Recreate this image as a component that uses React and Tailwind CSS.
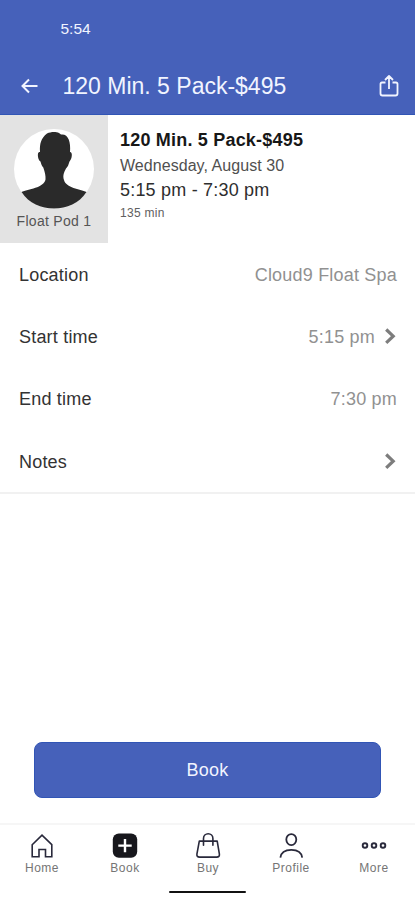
import React from 'react';

const details = [
  { label: 'Location', value: 'Cloud9 Float Spa', chevron: false },
  { label: 'Start time', value: '5:15 pm', chevron: true },
  { label: 'End time', value: '7:30 pm', chevron: false },
  { label: 'Notes', value: '', chevron: true },
];

const Chevron = () => (
  <svg width="13" height="18" viewBox="0 0 13 18" fill="none" stroke="#7d7d7d" strokeWidth="3.2">
    <path d="M2.200 1.500 9.200 8.200l-7 6.700" />
  </svg>
);

const HomeIcon = () => (
  <svg width="26" height="26" viewBox="0 0 26 26" fill="none" stroke="#29293b" strokeWidth="1.6">
    <path d="M3.200 11.700 13 2.200l9.800 9.500v12.100h-6.300v-7.300H10v7.300H3.200z" />
  </svg>
);

const BookIcon = () => (
  <svg width="26" height="26" viewBox="0 0 26 26">
    <rect x=".8" y=".4" width="24.4" height="24.4" rx="6" fill="#17171c" />
    <path d="M13 5.900v13.400M6.300 12.600h13.400" stroke="#fff" strokeWidth="2.4" />
  </svg>
);

const BagIcon = () => (
  <svg width="26" height="26" viewBox="0 0 26 26" fill="none" stroke="#29293b" strokeWidth="1.6" strokeLinecap="round" strokeLinejoin="round">
    <path d="M4.300 8.100h17.900l2.200 13q.3 3-2.700 3H4.600q-3 0-2.700-3z" />
    <path d="M8.500 12.200V5.500a4.700 4.700 0 0 1 9.400 0v6.700" />
  </svg>
);

const ProfileIcon = () => (
  <svg width="26" height="26" viewBox="0 0 26 26" fill="none" stroke="#29293b" strokeWidth="1.8">
    <ellipse cx="13.300" cy="6.600" rx="5" ry="5.500" />
    <path d="M2.400 24.600c.6-4.900 4.500-7.800 10.900-7.800s10.300 2.900 10.900 7.800" />
  </svg>
);

const MoreIcon = () => (
  <svg width="26" height="26" viewBox="0 0 26 26" fill="none" stroke="#29293b" strokeWidth="1.9">
    <circle cx="4" cy="12.500" r="2.300" />
    <circle cx="13" cy="12.500" r="2.300" />
    <circle cx="22" cy="12.500" r="2.300" />
  </svg>
);

const tabs = [
  { label: 'Home', Icon: HomeIcon },
  { label: 'Book', Icon: BookIcon },
  { label: 'Buy', Icon: BagIcon },
  { label: 'Profile', Icon: ProfileIcon },
  { label: 'More', Icon: MoreIcon },
];

const Header = () => (
  <header className="h-[115px] bg-[#4661ba] border-b border-[#3155b5] text-[#f1f4ff] flex flex-col">
    <div className="h-[57px] pl-[60.5px] flex items-center text-[15.5px] font-medium">5:54</div>
    <div className="h-[57px] pl-5 pr-4 flex items-center">
      <svg width="18" height="18" viewBox="0 0 18 18" fill="none" stroke="currentColor" strokeWidth="2">
        <path d="M17.500 9H2.500M9 2.500 2.500 9 9 15.500" />
      </svg>
      <h1 className="ml-[24.5px] pt-0.5 text-[23px] flex-1 whitespace-nowrap">120 Min. 5 Pack-$495</h1>
      <svg width="20" height="24" viewBox="0 0 20 24" fill="none" stroke="currentColor" strokeWidth="1.8" strokeLinejoin="round">
        <path d="M6.500 8.500H3Q1.500 8.500 1.500 10v9.500q0 2 2 2h13q2 0 2-2V10q0-1.500-1.500-1.500h-3.500M10 15V2.500M6 6l4-4 4 4" />
      </svg>
    </div>
  </header>
);

const Summary = () => (
  <section className="h-32 flex">
    <div className="w-[108px] bg-[#e3e3e3] pt-[13px] flex flex-col items-center">
      <svg width="82" height="82" viewBox="0 0 82 82">
        <circle cx="41" cy="41" r="40" fill="#fff" />
        <path
          d="M8.500 64C15 61 31 60 32.500 51.500c.3-4-.5-7-2.200-12-1.500-1.500-2.300-4-2.800-6-2-1-3-5-2.500-8 .2-1 1-1.500 2-1.500-.5-8 1-14 7-18.500 4-2 9-2 12-.5l2 1.500c7-1 10 7 9 17.500 3 0 2 7-.5 9.500-1 3-1.500 5-3.500 7-2 4-3.500 7-2 11.500C53 60 67 61 73.500 64 66 75.500 54 80.500 41 80.500S16 75.500 8.500 64z"
          fill="#2a2a2a"
        />
      </svg>
      <p className="text-sm leading-5 tracking-[0.3px] text-[#555] mt-px whitespace-nowrap">Float Pod 1</p>
    </div>
    <div className="pl-3 pt-[13px] whitespace-nowrap">
      <h2 className="text-lg leading-[25px] font-bold tracking-[0.2px] text-[#171717]">120 Min. 5 Pack-$495</h2>
      <p className="text-base leading-[26px] tracking-[0.05px] text-[#505050]">Wednesday, August 30</p>
      <p className="text-lg leading-[23px] tracking-[0.2px] text-[#2e2e2e]">5:15 pm - 7:30 pm</p>
      <p className="text-xs leading-[22px] tracking-[0.3px] text-[#606060]">135 min</p>
    </div>
  </section>
);

const App = () => {
  return (
    <div className="w-[415px] h-[900px] bg-white flex flex-col overflow-hidden font-['Liberation_Sans',Arial,sans-serif]">
      <Header />
      <Summary />

      <section className="h-[251px] pt-px border-b-2 border-[#f1f1f1]">
        {details.map((row) => (
          <div key={row.label} className="h-[62.2px] pl-[19px] pr-[18px] flex items-center text-lg tracking-[0.2px]">
            <span className="text-[#333]">{row.label}</span>
            <span className="ml-auto text-[#919191]">{row.value}</span>
            {row.chevron && <span className="ml-[9px]"><Chevron /></span>}
          </div>
        ))}
      </section>

      <div className="flex-1" />

      <button className="mx-[34px] mb-[25px] h-14 rounded-lg bg-[#4661ba] border border-[#3155b5] text-[#f1f4ff] text-lg tracking-[0.25px]">
        Book
      </button>

      <nav className="h-[77px] border-t-2 border-[#f6f6f6] flex flex-col items-center">
        <div className="w-full grid grid-cols-5 pt-2">
          {tabs.map(({ label, Icon }) => (
            <div key={label} className="flex flex-col items-center">
              <Icon />
              <span className="pl-px text-xs leading-[18px] tracking-[0.5px] text-[#757575]">{label}</span>
            </div>
          ))}
        </div>
        <div className="mt-3.5 w-[77px] h-0.5 rounded-full bg-[#111]" />
      </nav>
    </div>
  );
};

export default App;
